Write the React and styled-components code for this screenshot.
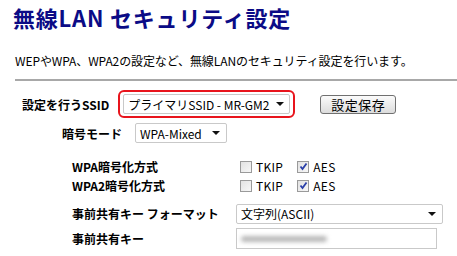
import React from "react";
import styled, { createGlobalStyle } from "styled-components";

const GlobalStyle = createGlobalStyle`
  body {
    margin: 0;
    background: #fff;
    font-family: "Noto Sans CJK JP", "DejaVu Sans", sans-serif;
    color: #000;
  }
`;

const Page = styled.div`
  width: 457px;
  height: 256px;
  overflow: hidden;
  padding-left: 13px;
  box-sizing: border-box;
`;

const Title = styled.h1`
  margin: 0;
  padding-top: 2px;
  height: 30px;
  font-size: 22px;
  line-height: 30px;
  font-weight: bold;
  color: #0b0b86;
  letter-spacing: 0.8px;
`;

const Lead = styled.p`
  margin: 21px 0 0 2px;
  font-size: 12px;
  line-height: 16px;
  letter-spacing: -0.1px;
`;

const Divider = styled.div`
  margin: 10px 0 0 2px;
  height: 2px;
  background: #a8a8a8;
`;

const Row = styled.div`
  display: flex;
  align-items: center;
  padding-left: ${(p) => p.indent}px;
  height: ${(p) => p.h}px;
  margin-top: ${(p) => p.top || 0}px;
`;

const Label = styled.span`
  font-size: 12px;
  font-weight: bold;
  width: ${(p) => (p.w ? `${p.w}px` : "auto")};
  flex-shrink: 0;
  white-space: nowrap;
`;

const Highlight = styled.div`
  margin-left: ${(p) => p.gap}px;
  border: 2px solid #e8141c;
  border-radius: 6px;
  padding: 2px 3px;
`;

const Select = styled.div`
  display: flex;
  align-items: center;
  justify-content: space-between;
  box-sizing: border-box;
  width: ${(p) => p.w}px;
  height: ${(p) => p.h || 20}px;
  margin-left: ${(p) => p.gap || 0}px;
  padding: 0 6px 0 4px;
  border: 1px solid #c9c9c9;
  border-radius: 2px;
  background: #fff;
  font-size: 12px;
  white-space: nowrap;
`;

const Arrow = styled.span`
  width: 0;
  height: 0;
  border-left: 4px solid transparent;
  border-right: 4px solid transparent;
  border-top: 4px solid #111;
  margin-left: 6px;
`;

const Button = styled.button`
  margin-left: ${(p) => p.gap}px;
  width: 76px;
  height: 19px;
  padding: 0;
  border: 1px solid #707070;
  border-radius: 3px;
  background: linear-gradient(#fbfbfb, #dcdcdc);
  font-family: inherit;
  font-size: 13px;
  line-height: 17px;
  letter-spacing: 0.5px;
  color: #000;
`;

const Grid = styled.div`
  display: grid;
  grid-template-columns: 164px auto;
  grid-auto-rows: ${(p) => p.rh}px;
  align-items: center;
  padding-left: 59px;
  margin-top: ${(p) => p.top}px;
`;

const Checks = styled.div`
  display: flex;
  align-items: center;
  padding-left: 4px;
  font-size: 12px;
`;

const Box = styled.span`
  display: inline-flex;
  align-items: center;
  justify-content: center;
  box-sizing: border-box;
  width: 12px;
  height: 12px;
  border: 1px solid #9a9a9a;
  background: linear-gradient(135deg, #e2e2e2, #f7f7f7);
  margin-right: 4px;
  margin-left: ${(p) => p.gap || 0}px;
`;

const CheckText = styled.span`
  letter-spacing: 0.3px;
`;

const Input = styled.div`
  display: flex;
  align-items: center;
  box-sizing: border-box;
  width: 201px;
  height: 21px;
  padding-left: 4px;
  border: 1px solid #c9c9c9;
  background: #fff;
`;

const Blur = styled.span`
  width: 86px;
  height: 6px;
  background: #b8b8b8;
  border-radius: 3px;
  filter: blur(2px);
`;

const Check = ({ checked, gap, label }) => (
  <>
    <Box gap={gap}>
      {checked && (
        <svg width="9" height="9" viewBox="0 0 9 9">
          <path d="M1.5 4.5 L3.5 7 L7.5 1.5" fill="none" stroke="#2a3fa8" strokeWidth="1.8" />
        </svg>
      )}
    </Box>
    <CheckText>{label}</CheckText>
  </>
);

export default function App() {
  return (
    <Page>
      <GlobalStyle />
      <Title>無線LAN セキュリティ設定</Title>
      <Lead>WEPやWPA、WPA2の設定など、無線LANのセキュリティ設定を行います。</Lead>
      <Divider />
      <Row indent={9} h={38} top={4}>
        <Label>設定を行うSSID</Label>
        <Highlight gap={9}>
          <Select w={167}>
            プライマリSSID - MR-GM2
            <Arrow />
          </Select>
        </Highlight>
        <Button gap={25}>設定保存</Button>
      </Row>
      <Row indent={49} h={20} top={0}>
        <Label w={73}>暗号モード</Label>
        <Select w={92}>
          WPA-Mixed
          <Arrow />
        </Select>
      </Row>
      <Grid rh={19} top={14}>
        <Label>WPA暗号化方式</Label>
        <Checks>
          <Check label="TKIP" />
          <Check checked gap={14} label="AES" />
        </Checks>
        <Label>WPA2暗号化方式</Label>
        <Checks>
          <Check label="TKIP" />
          <Check checked gap={14} label="AES" />
        </Checks>
      </Grid>
      <Grid rh={25} top={6}>
        <Label>事前共有キー フォーマット</Label>
        <Select w={207}>
          文字列(ASCII)
          <Arrow />
        </Select>
        <Label>事前共有キー</Label>
        <Input>
          <Blur />
        </Input>
      </Grid>
    </Page>
  );
}
